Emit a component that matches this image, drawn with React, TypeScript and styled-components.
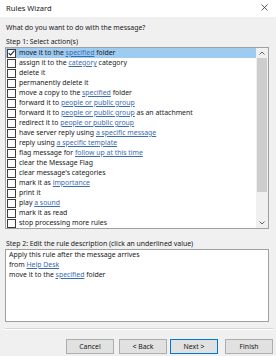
import React from "react";
import styled, { createGlobalStyle } from "styled-components";

const Global = createGlobalStyle`
  html, body { margin: 0; padding: 0; }
  body { width: 276px; height: 356px; overflow: hidden; background: #f0f0f0; }
  * { box-sizing: border-box; }
`;

const Window = styled.div`
  width: 276px;
  height: 356px;
  display: flex;
  flex-direction: column;
  background: #f0f0f0;
  font-family: "Noto Sans", "Open Sans", sans-serif;
  font-size: 6.9px;
  color: #1a1a1a;
`;

const TitleBar = styled.div`
  height: 17px;
  background: #ffffff;
  display: flex;
  align-items: center;
  justify-content: space-between;
  padding: 0 8px 2px 6px;
  font-size: 7.6px;
`;

const Content = styled.div`
  display: flex;
  flex-direction: column;
  padding: 0 7px 0 5px;
`;

const Label = styled.div<{ $top: number }>`
  margin-top: ${(p) => p.$top}px;
  padding-left: 1px;
  height: 10px;
  line-height: 10px;
  white-space: nowrap;
`;

const ListBox = styled.div`
  border: 1px solid #a0a0a0;
  background: #fff;
  display: flex;
  height: 182px;
`;

const List = styled.div`
  flex: 1;
  display: flex;
  flex-direction: column;
`;

const Row = styled.div<{ $selected?: boolean }>`
  height: 10px;
  display: flex;
  align-items: center;
  gap: 3px;
  padding-left: 1px;
  line-height: 10px;
  white-space: nowrap;
  background: ${(p) => (p.$selected ? "#9fcbf0" : "transparent")};
`;

const Box = styled.span`
  width: 9px;
  height: 9px;
  border: 1px solid #3c3c3c;
  background: #fff;
  display: flex;
  align-items: center;
  justify-content: center;
  flex: none;
`;

const Link = styled.span`
  color: #3a6db0;
  text-decoration: underline;
  text-decoration-thickness: 0.5px;
  text-underline-offset: 1px;
`;

const Scrollbar = styled.div`
  width: 12px;
  background: #f0f0f0;
  display: flex;
  flex-direction: column;
`;

const Arrow = styled.div`
  height: 10px;
  display: flex;
  align-items: center;
  justify-content: center;
`;

const Thumb = styled.div`
  margin: 0 1px;
  height: 134px;
  background: #cdcdcd;
`;

const Track = styled.div`
  flex: 1;
`;

const Desc = styled.div`
  height: 73px;
  border: 1px solid #a0a0a0;
  background: #fff;
  padding: 0 3px;
  line-height: 10px;
`;

const Separator = styled.div`
  margin: 6px 3px 0 5px;
  height: 2px;
  border-top: 1px solid #d5d5d5;
  border-bottom: 1px solid #ffffff;
`;

const ButtonRow = styled.div`
  margin-top: 9px;
  display: flex;
  justify-content: flex-end;
  padding-right: 3px;
`;

const Button = styled.div<{ $gap: number; $default?: boolean }>`
  margin-left: ${(p) => p.$gap}px;
  width: 48px;
  height: 15px;
  display: flex;
  align-items: center;
  justify-content: center;
  background: #e1e1e1;
  border: 1px solid ${(p) => (p.$default ? "#0078d7" : "#adadad")};
`;

const Check = () => (
  <svg width="8" height="8" viewBox="0 0 8 8">
    <path d="M0.8 4.2 L3 6.4 L7.4 1.2" fill="none" stroke="#1a1a1a" strokeWidth="1.2" />
  </svg>
);

const Chevron = ({ up }: { up?: boolean }) => (
  <svg width="6" height="4" viewBox="0 0 6 4">
    <path d={up ? "M0.5 3.5 L3 1 L5.5 3.5" : "M0.5 0.5 L3 3 L5.5 0.5"} fill="none" stroke="#606060" strokeWidth="1" />
  </svg>
);

type Item = { parts: (string | { link: string })[]; checked?: boolean };

const items: Item[] = [
  { parts: ["move it to the ", { link: "specified" }, " folder"], checked: true },
  { parts: ["assign it to the ", { link: "category" }, " category"] },
  { parts: ["delete it"] },
  { parts: ["permanently delete it"] },
  { parts: ["move a copy to the ", { link: "specified" }, " folder"] },
  { parts: ["forward it to ", { link: "people or public group" }] },
  { parts: ["forward it to ", { link: "people or public group" }, " as an attachment"] },
  { parts: ["redirect it to ", { link: "people or public group" }] },
  { parts: ["have server reply using ", { link: "a specific message" }] },
  { parts: ["reply using ", { link: "a specific template" }] },
  { parts: ["flag message for ", { link: "follow up at this time" }] },
  { parts: ["clear the Message Flag"] },
  { parts: ["clear message's categories"] },
  { parts: ["mark it as ", { link: "importance" }] },
  { parts: ["print it"] },
  { parts: ["play ", { link: "a sound" }] },
  { parts: ["mark it as read"] },
  { parts: ["stop processing more rules"] },
];

const renderParts = (parts: Item["parts"]) =>
  parts.map((p, i) => (typeof p === "string" ? <span key={i}>{p}</span> : <Link key={i}>{p.link}</Link>));

export default function App() {
  return (
    <Window>
      <Global />
      <TitleBar>
        <span>Rules Wizard</span>
        <svg width="7" height="7" viewBox="0 0 7 7">
          <path d="M0.5 0.5 L6.5 6.5 M6.5 0.5 L0.5 6.5" stroke="#333" strokeWidth="0.8" />
        </svg>
      </TitleBar>
      <Content>
        <Label $top={6}>What do you want to do with the message?</Label>
        <Label $top={4}>Step 1: Select action(s)</Label>
        <ListBox>
          <List>
            {items.map((it, i) => (
              <Row key={i} $selected={i === 0}>
                <Box>{it.checked && <Check />}</Box>
                <span>{renderParts(it.parts)}</span>
              </Row>
            ))}
          </List>
          <Scrollbar>
            <Arrow>
              <Chevron up />
            </Arrow>
            <Thumb />
            <Track />
            <Arrow>
              <Chevron />
            </Arrow>
          </Scrollbar>
        </ListBox>
        <Label $top={10}>Step 2: Edit the rule description (click an underlined value)</Label>
        <Desc>
          <div>Apply this rule after the message arrives</div>
          <div>
            from <Link>Help Desk</Link>
          </div>
          <div>
            move it to the <Link>specified</Link> folder
          </div>
        </Desc>
      </Content>
      <Separator />
      <ButtonRow>
        <Button $gap={0}>Cancel</Button>
        <Button $gap={5}>&lt; Back</Button>
        <Button $gap={3} $default>
          Next &gt;
        </Button>
        <Button $gap={7}>Finish</Button>
      </ButtonRow>
    </Window>
  );
}
